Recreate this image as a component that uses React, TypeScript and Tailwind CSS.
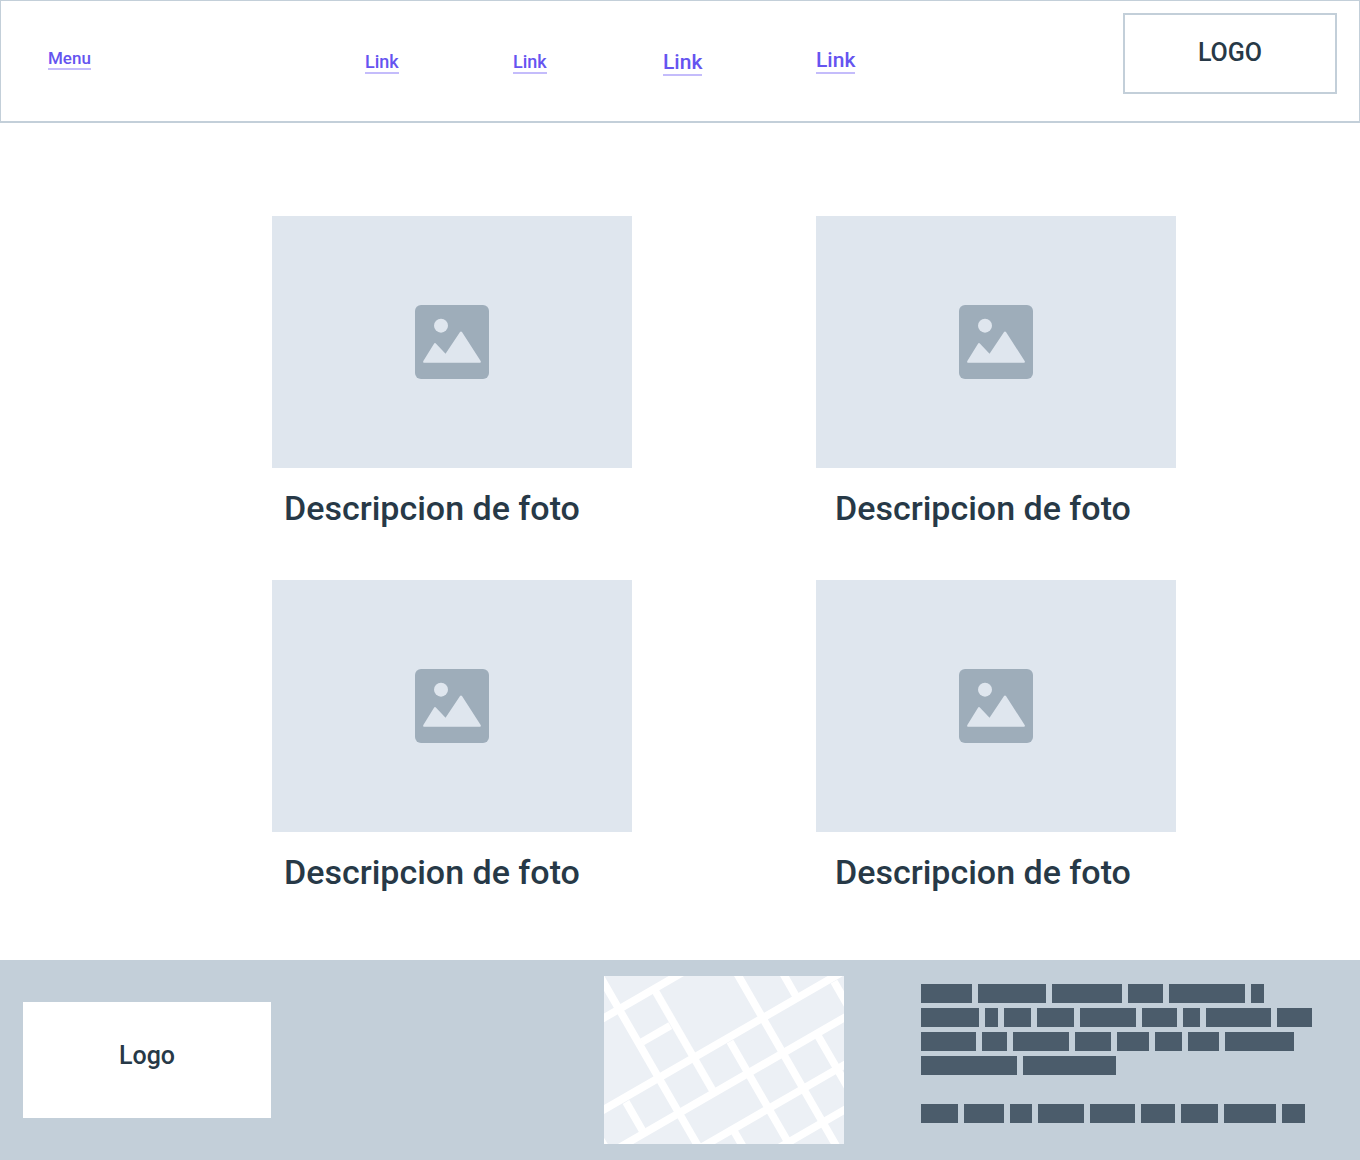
const navLinks = [
  { label: "Menu", className: "mt-[47px] text-[17px]" },
  { label: "Link", className: "mt-[51px] text-[18px]" },
  { label: "Link", className: "mt-[51px] text-[18px]" },
  { label: "Link", className: "mt-[51px] pb-0.5 text-[21px]" },
  { label: "Link", className: "mt-[49px] pb-0.5 text-[21px]" },
];

const textRows = [
  [51, 68, 70, 35, 76, 13],
  [58, 13, 27, 37, 56, 35, 17, 65, 35],
  [55, 25, 56, 36, 32, 27, 31, 69],
  [96, 93],
  [],
  [37, 40, 22, 46, 45, 34, 37, 52, 23],
];

const photos = [
  { id: 1, captionClass: "pl-3" },
  { id: 2, captionClass: "pl-[19px]" },
  { id: 3, captionClass: "pl-3" },
  { id: 4, captionClass: "pl-[19px]" },
];

function ImageIcon() {
  return (
    <svg width="74" height="74" viewBox="0 0 222 222" aria-hidden="true">
      <rect width="222" height="222" rx="18" fill="#9eadba" />
      <circle cx="78" cy="62" r="21" fill="#dfe6ee" />
      <path
        d="M28 170 60 118 92 152 138 83 194 170Z"
        fill="#dfe6ee"
        stroke="#dfe6ee"
        strokeWidth="7"
        strokeLinejoin="round"
      />
    </svg>
  );
}

function StreetMap() {
  return (
    <svg
      className="h-[168px] w-60 justify-self-end bg-[#ecf0f5]"
      viewBox="12 18 720 504"
      role="img"
      aria-label="Mapa"
    >
      <g stroke="#ffffff" strokeWidth="23" fill="none">
        <path d="M-8 155 248 7" />
        <path d="M-8 430 732 3" />
        <path d="M42 542 752 132" />
        <path d="M287 542 752 274" />
        <path d="M522 542 752 409" />
        <path d="M126 216 211 167" />
        <path d="M-6 8 302 542" />
        <path d="M167 65 338 361" />
        <path d="M390 215 573 532" />
        <path d="M404 -2 717 542" />
        <path d="M542 -2 587 77" />
        <path d="M702 35 747 113" />
        <path d="M655 199 752 367" />
        <path d="M78 396 127 481" />
        <path d="M403 485 436 542" />
        <path d="M-2 502 22 542" />
      </g>
    </svg>
  );
}

export default function App() {
  return (
    <div className="flex min-h-screen flex-col bg-white font-['Roboto',sans-serif] font-medium text-[#273947]">
      <header className="border border-b-2 border-[#c3cfd9] pr-[22px] pl-[47px]">
        <nav className="grid h-[120px] grid-cols-[317fr_148fr_150fr_153fr_307fr_214px] items-start">
          {navLinks.map((link, i) => (
            <a
              key={i}
              href="#"
              className={`justify-self-start border-b-2 border-[#c4bcfb] leading-5 text-[#6554f0] ${link.className}`}
            >
              {link.label}
            </a>
          ))}
          <div className="mt-3 flex h-[81px] items-center justify-center border-2 border-[#c3cfd9] pb-0.5 text-[25px]">
            LOGO
          </div>
        </nav>
      </header>

      <main className="grid flex-1 grid-cols-[360px_360px] content-start gap-x-[184px] gap-y-13 pt-[93px] pl-[20%]">
        {photos.map((photo) => (
          <figure key={photo.id}>
            <div className="flex h-[252px] items-center justify-center bg-[#dfe6ee]">
              <ImageIcon />
            </div>
            <figcaption className={`pt-5 text-[34px] leading-10 ${photo.captionClass}`}>
              Descripcion de foto
            </figcaption>
          </figure>
        ))}
      </main>

      <footer className="grid h-[200px] grid-cols-[248px_1fr_391px] items-start gap-x-[77px] bg-[#c3cfd9] pt-4 pr-12 pl-[23px]">
        <div className="mt-[26px] flex h-[116px] items-center justify-center bg-white pb-2 text-[25px]">
          Logo
        </div>
        <StreetMap />
        <div className="mt-2 flex flex-col gap-[5px]">
          {textRows.map((row, i) => (
            <div key={i} className="flex h-[19px] gap-1.5">
              {row.map((width, j) => (
                <span key={j} className="bg-[#4b5c6b]" style={{ width }} />
              ))}
            </div>
          ))}
        </div>
      </footer>
    </div>
  );
}
